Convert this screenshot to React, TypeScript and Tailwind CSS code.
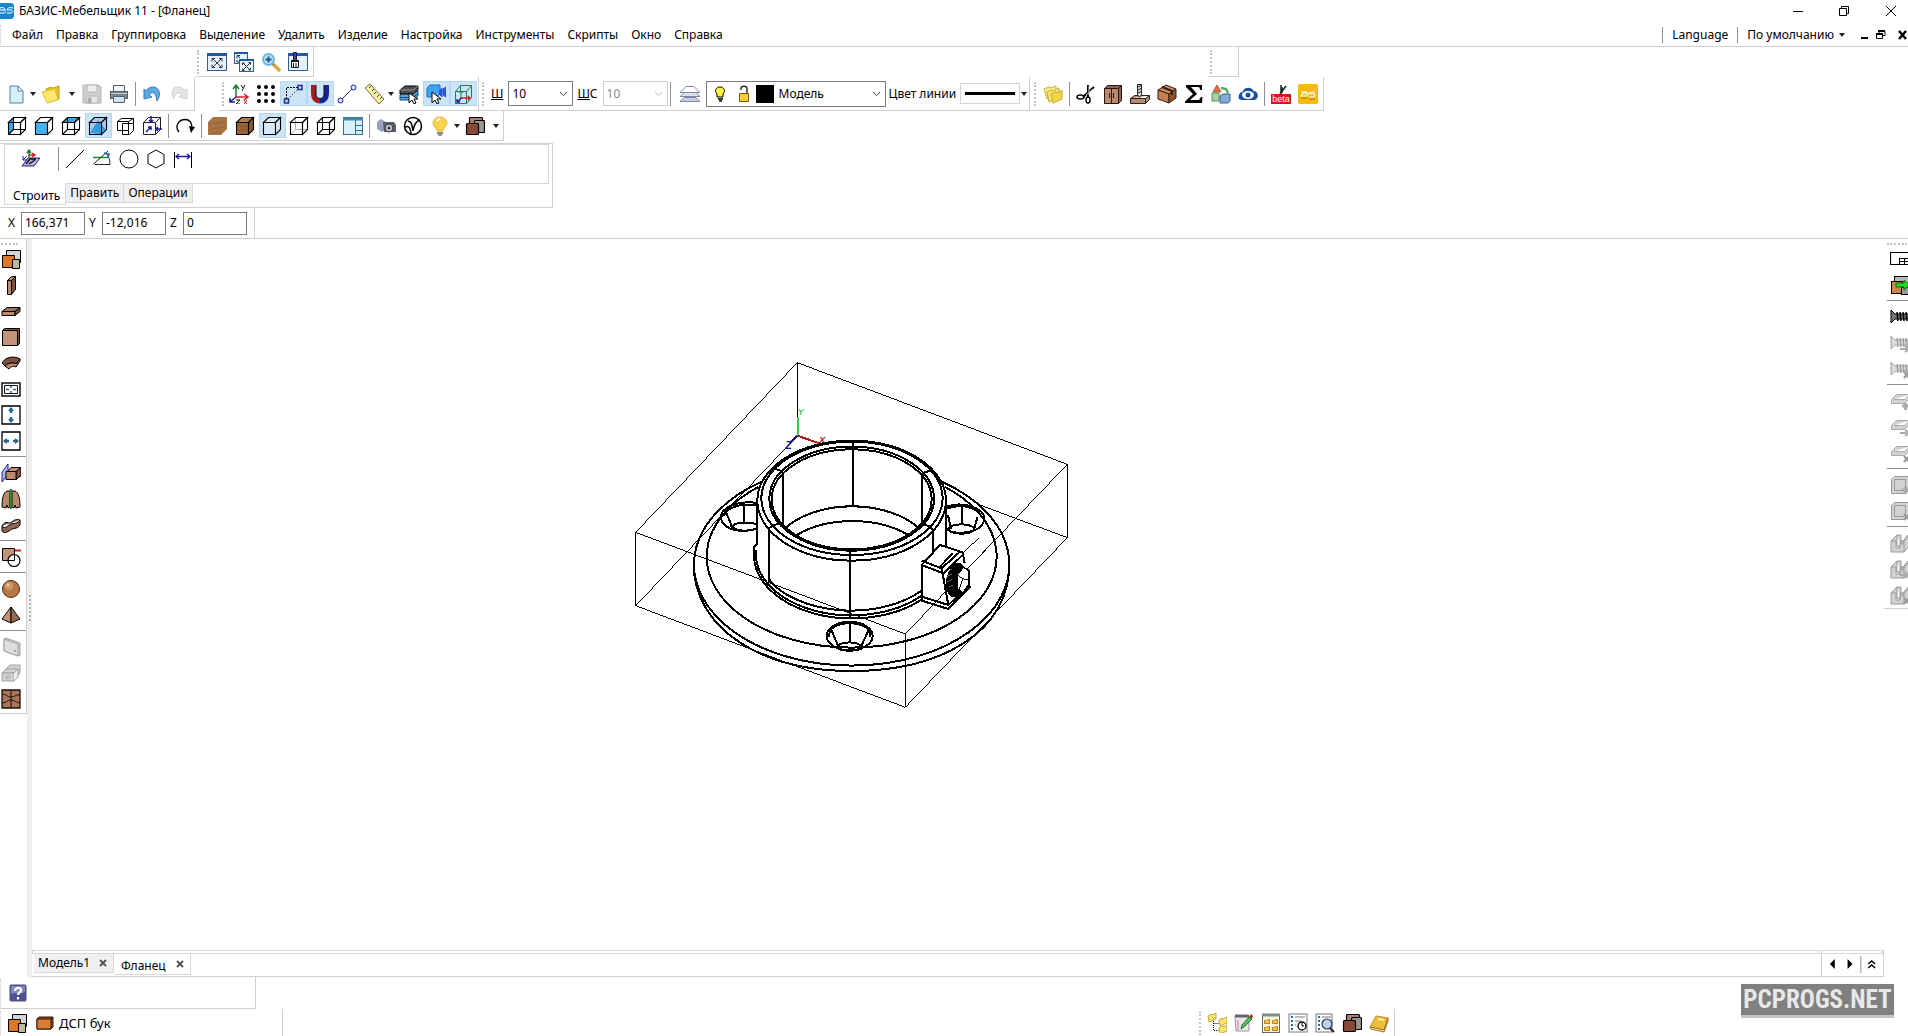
import { useState } from "react";
import type { ReactNode } from "react";

const MENU = ["Файл", "Правка", "Группировка", "Выделение", "Удалить", "Изделие", "Настройка", "Инструменты", "Скрипты", "Окно", "Справка"];

const WOOD = "#b98a70";
const DARK = "#7d5140";
const GREY = "#d2d2d2";

const wire = "M1.500 6.500h12v12h-12zM1.500 6.500l5-5h12l-5 5M18.500 1.500v12l-5 5";
const back = "M6.500 1.500v12h12M6.500 13.500l-5 5";

function Box({ front = "none", top = "none", side = "none", hidden = false, stroke = "#000" }: { front?: string; top?: string; side?: string; hidden?: boolean; stroke?: string }) {
  return (
    <g stroke={stroke} strokeWidth="1.100">
      <path d="M1.500 6.500h12v12h-12z" fill={front} />
      <path d="M1.500 6.500l5-5h12l-5 5z" fill={top} />
      <path d="M18.500 1.500v12l-5 5v-12z" fill={side} />
      {hidden && <path d={back} />}
    </g>
  );
}

function Screw({ c = "#a0a0a0", mark }: { c?: string; mark?: ReactNode }) {
  return (
    <g>
      <path d="M1 3l4 4h15v5H5l-4 4z" fill={c === "#000" ? "#777" : "#ddd"} stroke={c} />
      <path d="M7 5l1 9M10 5l1 9M13 5l1 9M16 5l1 9M19 5l1 9" stroke={c} strokeWidth="1.500" />
      {mark}
    </g>
  );
}

const plusMark = <path d="M12 15h7M15.500 12v7" stroke="#aaa" strokeWidth="3" />;
const arrowMark = <path d="M10 16h7M15 13l4 3-4 3" stroke="#aaa" strokeWidth="2" />;
const crossMark = <path d="M14 13l5 6M19 13l-5 6" stroke="#999" strokeWidth="2" />;

const slab = <path d="M1.500 8.500l5-5h13v4l-5 5h-13zM4 8.500h11l4.500-5M1.500 8.500v4" fill={GREY} stroke="#aaa" />;
const plate = <path d="M1.500 4.500l3-3h14v14l-3 3h-14zM4.500 4.500h11v11h-11z" fill={GREY} stroke="#999" />;
const groove = <path d="M1 8l6-6h4v9h2V8l5-6h3v9l-7 8H1zM7 2v11h4M1 8h5v7h4V8h4v11M14 8l6-6" fill={GREY} stroke="#999" />;

const panels = (a: string, b: string, c: string) => (
  <g stroke="#000">
    <path d="M5.500 1.500h14v12h-14z" fill={b} />
    <path d="M1.500 6.500h12v12h-12z" fill={a} />
    <path d="M11.500 10.500h7v9h-7z" fill={c} />
  </g>
);

const materials = (
  <g stroke="#000" strokeWidth="1.200">
    <rect x="4.500" y="1.500" width="13" height="12" rx="1" fill="#ad7f75" />
    <rect x="9.500" y="4.500" width="10" height="12" rx="1" fill="#9b9691" />
    <rect x="1.500" y="7.500" width="12" height="11" rx="1" fill="#874a35" />
  </g>
);

const folder = (x: number, y: number) => (
  <path d={`M${x} ${y}l3-2 1 1 4-2v6l-7 3z`} fill="#f9e56a" stroke="#b39a1b" strokeWidth=".8" />
);

const windowFrame = (
  <g>
    <rect x=".5" y="1.500" width="19" height="17" fill="#e5f1fc" stroke="#2b5f9e" />
    <path d="M0 2.500h20" stroke="#1f58a4" strokeWidth="3" />
  </g>
);

const icons: Record<string, ReactNode> = {
  fit: <g>{windowFrame}<path d="M6 7l8 8M14 7l-8 8M5 9.500V6.500h3M12 6.500h3v3M15 12.500v3h-3M8 15.500H5v-3" stroke="#333" /></g>,
  fitAll: (
    <g>
      <rect x=".5" y=".5" width="13" height="11" fill="#e5f1fc" stroke="#2b5f9e" />
      <path d="M0 1h14" stroke="#1f58a4" strokeWidth="2" />
      <path d="M3 3l3 3M6 3.500H3v3M3 8v2h3" stroke="#333" />
      <rect x="5.500" y="7.500" width="14" height="12" fill="#e5f1fc" stroke="#2b5f9e" />
      <path d="M5 8h15" stroke="#1f58a4" strokeWidth="2" />
      <path d="M9 11l7 7M16 11l-7 7M8.500 13v-2h2M14.500 10.500h2v2M16.500 16v2h-2M10.500 18.500h-2v-2" stroke="#333" />
    </g>
  ),
  zoomIn: (
    <g>
      <path d="M12 12l6 6" stroke="#d9a93e" strokeWidth="3.500" strokeLinecap="round" />
      <path d="M11 11l2 2" stroke="#888" strokeWidth="2" />
      <circle cx="7.500" cy="7.500" r="5.500" fill="#b9e2f7" stroke="#6db3de" strokeWidth="2" />
      <path d="M4.500 7.500h6M7.500 4.500v6" stroke="#165a9c" strokeWidth="2" />
    </g>
  ),
  brush: (
    <g>
      {windowFrame}
      <path d="M5.500 .5h3v8h-3z" fill="#4b3c9c" stroke="#15154a" />
      <path d="M3.500 8.500h7v7h-7z" fill="#fff" stroke="#111" />
      <path d="M3 9.500h8M5.500 11v5M8 11v5" stroke="#111" />
    </g>
  ),
  doc: <path d="M4 2h8l5 5v12H4zM12 2v5h5" fill="#d7eefb" stroke="#4b83a5" />,
  open: (
    <g strokeLinejoin="round">
      <path d="M5 5l5-2 2 1 6-2v13l-11 3z" fill="#e6bf2d" stroke="#c39f24" />
      <path d="M1 8l13-3 3 11-11 3z" fill="#fbe86c" stroke="#e0bd35" />
    </g>
  ),
  save: (
    <g stroke="#b4b4b4" fill="#cfcfcf">
      <path d="M1 1h16l2 2v16H1z" />
      <path d="M5 1h10v7H5z" fill="#eee" />
      <path d="M4 12h12v7H4z" fill="#e6e6e6" />
      <path d="M6 14h3v5H6z" fill="#aaa" />
    </g>
  ),
  print: (
    <g stroke="#565c63">
      <path d="M4.500 1.500h11v7h-11z" fill="#eef5fb" />
      <rect x="1.500" y="7.500" width="17" height="7" fill="#7c858e" />
      <path d="M2 9.500h16" stroke="#c5ccd2" />
      <path d="M4.500 12.500h11v6h-11z" fill="#cfe5f5" />
    </g>
  ),
  undo: <path d="M2 5v10l8-2-3-2c3-4 7-3 8 6 5-7 2-14-4-14-3 0-5 1-7 4z" fill="#5ba8e2" stroke="#3a7dba" />,
  redo: <path d="M18 5v10l-8-2 3-2c-3-4-7-3-8 4-4-6-2-12 4-12 3 0 5 1 7 4z" fill="#e4e4e4" stroke="#d2d2d2" />,
  axes: (
    <g>
      <path d="M7 13V2M4 5l3-4 3 4" stroke="#1a7a2e" strokeWidth="1.500" />
      <path d="M7 13h11M15 10l4 3-4 3" stroke="#c22" strokeWidth="1.500" />
      <path d="M7 13l-5 4M1 14v4h5" stroke="#1a1a9c" strokeWidth="1.500" />
      <path d="M12 1l2 3M16 1l-3 6M7 16h4l-4 4h4" stroke="#111" />
      <path d="M15 16l3 4M18 16l-3 4" stroke="#c22" />
    </g>
  ),
  dots: <g fill="#000">{[3, 10, 17].map((x) => [3, 10, 17].map((y) => <circle key={x + "," + y} cx={x} cy={y} r="2" />))}</g>,
  ortho: (
    <g stroke="#2a2a8c">
      <path d="M3.500 15V3.500H15" stroke="#000" strokeDasharray="2 1" />
      <path d="M5 15L15 5" strokeDasharray="1 2" stroke="#000" />
      <rect x="1.500" y="15" width="4" height="4" fill="#cce4f7" strokeWidth="1.500" />
      <rect x="15" y="1.500" width="4" height="4" fill="#cce4f7" strokeWidth="1.500" />
    </g>
  ),
  magnet: (
    <g strokeWidth="5">
      <path d="M3.500 1v9c0 4 2.500 7 6.500 7" stroke="#a51c22" />
      <path d="M16.500 1v9c0 4-2.500 7-6.500 7" stroke="#16249b" />
      <path d="M6 1v9c0 3 1.500 4.500 4 4.500s4-1.500 4-4.500V1" stroke="#111" strokeWidth="1" />
    </g>
  ),
  segment: (
    <g stroke="#1d1d8c">
      <path d="M4 16L16 4" stroke="#333" />
      <circle cx="3.500" cy="16.500" r="2.500" fill="#dbe8ff" />
      <circle cx="16.500" cy="3.500" r="2.500" fill="#dbe8ff" />
    </g>
  ),
  ruler: (
    <g>
      <path d="M1 4l5-4 14 15-5 5z" fill="#f3eea0" stroke="#77724b" />
      <path d="M7 2L5 4M10 5L8 7M12 8l-2 2M15 11l-2 2M18 13l-2 2" stroke="#444" />
    </g>
  ),
  pickLayer: (
    <g>
      <path d="M1 11l5-4h13v5l-5 4H1z" fill="#53a8da" stroke="#174d7b" />
      <path d="M1 13.500h13l5-4" stroke="#174d7b" />
      <path d="M1 6l5-4h13v4l-5 4H1z" fill="#4e4e52" stroke="#000" />
      <path d="M1 6h13l5-4" stroke="#999" />
      <path d="M10 9v10l3-3 2 4 2-1-2-4h4z" fill="#fff" stroke="#000" />
    </g>
  ),
  pickCam: (
    <g>
      <path d="M1 4l3-3h10v9l-3 3H1z" fill="#3ea6ee" stroke="#1c71b5" />
      <path d="M13 7l3-3v9l-3-3M17 5l3-2v10l-3-2z" fill="#2b55d9" stroke="#2b55d9" />
      <path d="M6 8v11l3-3 2 4 2-1-2-4h4z" fill="#fff" stroke="#000" />
    </g>
  ),
  boxAxes: (
    <g>
      <path d="M2.500 7.500l5-6h11v12l-5 6h-11zM2.500 7.500h11l5-6M13.500 7.500v12M7.500 1.500v6" stroke="#17824e" />
      <path d="M8 7v7M6 9l2-2 2 2" stroke="#17824e" />
      <path d="M8 14h9M15 12l2 2-2 2" stroke="#d02020" strokeWidth="1.500" />
      <path d="M8 14l-3 4M4 15v3h3" stroke="#20208c" strokeWidth="1.500" />
    </g>
  ),
  stack: (
    <g stroke="#8087a0">
      <path d="M0 17.500l4-4h12l4 4z" fill="#c8cce0" />
      <path d="M0 12.500l4-4h12l4 4z" fill="#dde0ee" />
      <path d="M0 8.500l6-6h8l6 6z" fill="#fff" />
    </g>
  ),
  folders: (
    <g stroke="#cbab35">
      <path d="M1 5l5-2 2 1 5-2v9L4 15z" fill="#fbee88" />
      <path d="M4 8l4-2 2 1 6-3v9L6 18z" fill="#fae370" />
      <path d="M8 10l4-2 2 1 5-3v9l-9 4z" fill="#f3d548" />
    </g>
  ),
  scissors: (
    <g stroke="#000">
      <path d="M12 1v12M18 3L7 13" strokeWidth="2" />
      <path d="M13 2v9M17 5l-7 6" stroke="#ccc" />
      <ellipse cx="4.500" cy="13" rx="3.500" ry="2" strokeWidth="1.500" />
      <ellipse cx="12" cy="16" rx="2" ry="3" strokeWidth="1.500" />
    </g>
  ),
  wardrobe: (
    <g stroke="#2a1510">
      <path d="M1.500 4.500l3-3h14v15l-3 3h-14z" fill="#8e6555" />
      <path d="M15.500 4.500l3-3" />
      <path d="M1.500 4.500h14v15h-14z" fill={WOOD} />
      <path d="M8.500 5v14M6.500 9v5M10.500 9v5" />
    </g>
  ),
  drill: (
    <g stroke="#222">
      <path d="M.5 14.500l4-3h15v4l-4 4H.5zM.5 14.500h15l4-3M15.500 14.500v5" fill={WOOD} />
      <path d="M7.500 .5h4v10l-2 3-2-3z" fill="#ddd" />
      <path d="M8 3l4-2M8 6l4-2M8 9l4-2" />
    </g>
  ),
  carton: (
    <g stroke="#3a1d0c">
      <path d="M1 6l8-5 10 4-7 5z" fill="#c98e64" />
      <path d="M1 6l11 4v9L1 15z" fill="#c08254" />
      <path d="M19 5v9l-7 5v-9z" fill="#8d542d" />
      <path d="M5 3l10 4v4" strokeWidth="2" />
    </g>
  ),
  sigma: <path d="M2 1h16v5h-1.500l-1.500-3H7l6 7-7 6h9l2-3h1.500l-.5 6H1v-1.500l8-7.500-7-7z" fill="#000" />,
  recycle: (
    <g>
      <path d="M6 1l4 7H2z" fill="#e0714c" stroke="#b5523a" />
      <path d="M1 9h7v8H1z" fill="#a9d4a3" stroke="#4d924d" />
      <path d="M10 4l5 1 2 4" stroke="#5aae5a" strokeWidth="2.500" />
      <path d="M9 12l3-2h7v7l-2 2H9z" fill="#82acd6" stroke="#2e609b" />
    </g>
  ),
  cloudEye: (
    <g>
      <path d="M.5 13c0-3 2-5 4-5 1-5 9-6 11-1 3 0 5 3 4 6s-3 3-5 3h-10c-3 0-4-1-4-3z" fill="#1b4fa0" />
      <ellipse cx="10" cy="11" rx="6" ry="4" fill="#fff" />
      <circle cx="10" cy="11" r="2.500" fill="#1b4fa0" />
    </g>
  ),
  beta: (
    <g>
      <path d="M10 1v9M15 2l-6 8M11 3v6" stroke="#222" strokeWidth="1.500" />
      <rect x="0" y="10" width="20" height="10" fill="#d4151b" />
      <text x="10" y="18" fontSize="9" textAnchor="middle" fill="#fff" fontFamily="Liberation Sans, sans-serif">beta</text>
    </g>
  ),
  basisYellow: (
    <g>
      <rect width="20" height="20" rx="2" fill="#f5b90f" />
      <path d="M3 8c4-1 6 0 6 1M3 12h5c2 0 2-3 0-3-4 0-5 3-5 3zM17 8c-4 0-6 0-6 2h4c3 0 2 3 0 3h-4" stroke="#fff" strokeWidth="1.200" />
      <path d="M3 14h6M11 15h6" stroke="#9b7713" />
    </g>
  ),
  cubeLeft: <g><path d="M1.500 6.500l5-5v12l-5 5z" fill="#3fa6e8" /><Box hidden /></g>,
  cubeFront: <Box front="#41b4ee" />,
  cubeTop: <Box top="#41a4e0" hidden />,
  cubeIso: <g><Box front="#a9ccee" side="#a9ccee" top="#a9ccee" /><path d="M10 4l8 10-5 4-11-1z" fill="#2f9be3" /><path d={wire} stroke="#000" /></g>,
  cubeFrame: <path d="M2.500 5.500h11v9h-11zM2.500 5.500l4-3h12l-5 3M7.500 7.500h11v-5M7.500 7.500v11h7l4-4v-7M13.500 14.500v4" stroke="#000" />,
  cubeArrows: (
    <g>
      <path d={wire} stroke="#222" />
      <path d="M9 0v6M7 4l2 2 2-2M20 13h-6M16 11l-2 2 2 2M4 16l5-5M6 11h3v3" stroke="#1b1ba0" strokeWidth="1.500" />
    </g>
  ),
  rotate: <g><path d="M4 16C-1 10 4 3.500 10 3.500c5 0 7 4 7 9" stroke="#000" strokeWidth="1.300" /><path d="M14 10l6 1-4 6z" fill="#000" /></g>,
  woodFlat: <g><path d="M0 6l5-5h14v12l-6 6H0z" fill="#a87445" /><path d="M2 9c6-5 10 2 16-5M2 14c6-4 9 1 16-5M3 18c5-3 7 0 11-4" stroke="#94602f" /></g>,
  woodBox: <g><Box front="#9c6437" top="#b27d4c" side="#8a5830" /><path d="M2 10c4-2 7 2 11 0M2 15c4-3 7 1 11-2" stroke="#84501f" /></g>,
  blueBox: <Box front="#d6e9f8" top="#d6e9f8" side="#d6e9f8" />,
  hiddenThin: <g><path d={back} stroke="#aaa" /><Box /></g>,
  wireBox: <Box hidden />,
  layout: (
    <g>
      <rect x=".5" y="1.500" width="19" height="17" fill="#d8f1fb" stroke="#2f7295" />
      <path d="M0 3h20" stroke="#3f89b0" strokeWidth="3" />
      <path d="M12.500 4v15M12 9.500h7M12 14.500h7" stroke="#2f7295" />
    </g>
  ),
  camera: (
    <g>
      <path d="M1 6l4-3 5 3v7l-4 3-5-3z" fill="#9b9fc0" />
      <path d="M7 6h11l2 3v7H8z" fill="#5c5d6f" />
      <circle cx="13" cy="12" r="4" fill="#bfc4cf" stroke="#333" />
      <circle cx="13" cy="12" r="1.500" fill="#334" />
    </g>
  ),
  vray: <g stroke="#000"><circle cx="10" cy="10" r="8.500" strokeWidth="1.500" /><path d="M5 5c4 1 4 4 5 10 1-6 3-10 7-11M2 11c4-2 6 2 6 7" strokeWidth="1.500" /></g>,
  bulb: (
    <g>
      <path d="M10 1c-4 0-7 3-7 6s4 5 4 8h6c0-3 4-5 4-8s-3-6-7-6z" fill="#fbd34c" stroke="#e3b44a" />
      <path d="M7 5c1-2 3-2 3-2" stroke="#fff" strokeWidth="2" />
      <path d="M7 16h6v2l-2 2H9l-2-2z" fill="#8a8a8a" />
    </g>
  ),
  materials,
  sketch: (
    <g>
      <path d="M1 17l6-8h12l-6 8z" fill="#b8b2ea" stroke="#29206e" />
      <path d="M5 15l4-5h6M8 15l6-4" stroke="#111" strokeWidth="1.500" />
      <path d="M8 9V1M6 4l2-3 2 3" stroke="#208038" strokeWidth="1.500" />
      <path d="M8 6l5 0M11 4l3 2-3 2" stroke="#c22" strokeWidth="1.500" />
      <path d="M6 7L2 11M2 7v4h4" stroke="#1b1ba0" />
    </g>
  ),
  line: <path d="M1 19L19 1" stroke="#000" />,
  angle: <g><path d="M1 8.500h15" stroke="#1b8b2e" strokeWidth="1.500" /><path d="M1 15.500L16 2M3 15.500h15c0-5-1-8-4-11" stroke="#222" /><path d="M12 4l5 1-1 4" stroke="#26a" strokeWidth="1.500" /></g>,
  circle: <circle cx="10" cy="10" r="9" stroke="#000" />,
  hexagon: <path d="M10 1l8 4.500v9L10 19l-8-4.500v-9z" stroke="#000" />,
  dimension: <g><path d="M1.500 3v16M18.500 3v16" stroke="#000" /><path d="M3 7.500h14M6 5L3 7.500 6 10M14 5l3 2.500-3 2.500" stroke="#1b1ba0" strokeWidth="1.300" /></g>,
  panelsOrange: panels("#d97a2b", "#d3d3da", "#bfb89c"),
  vertical: <g stroke="#000"><path d="M10.500 5.500l4-4v13l-4 5z" fill={DARK} /><path d="M6.500 5.500l4-4h4l-4 4z" fill={WOOD} /><path d="M6.500 5.500h4v14h-4z" fill={WOOD} /></g>,
  horizontal: <g stroke="#000"><path d="M1 10.500l5-4h13l-5 4z" fill="#9b7464" /><path d="M1 10.500h13v4H1z" fill={WOOD} /><path d="M14 10.500l5-4v4l-5 4z" fill={DARK} /></g>,
  frontal: <g stroke="#000"><path d="M1.500 3.500l2-2h15v15l-2 2z" fill={DARK} /><path d="M1.500 3.500h15v15h-15z" fill="#c39377" /></g>,
  bent: <g stroke="#000"><path d="M1 10c4-7 13-7 18-4l-4 5c-3-2-8-1-11 2z" fill={DARK} /><path d="M4 13c3-3 8-4 11-2l4-5v2l-4 6c-2-1-5-1-7 2z" fill={WOOD} /></g>,
  frameArrows: (
    <g>
      <path d="M1 4h18v13H1z" fill="#fff" stroke="#111" strokeWidth="1.500" />
      <path d="M3.500 6.500h13v8h-13z" stroke="#111" />
      <path d="M5 10.500h3M12 10.500h3M10 7v2M10 12v2" stroke="#31668f" strokeWidth="1.500" />
    </g>
  ),
  arrowsV: <g><path d="M1 1h18v18H1z" stroke="#000" strokeWidth="1.300" /><path d="M10 3v5M10 12v5" stroke="#256493" strokeWidth="2.500" /><path d="M7 6l3-4 3 4zM7 14l3 4 3-4z" fill="#256493" /></g>,
  arrowsH: <g><path d="M1 1h18v18H1z" stroke="#000" strokeWidth="1.300" /><path d="M3 10h5M12 10h5" stroke="#256493" strokeWidth="2.500" /><path d="M6 7l-4 3 4 3zM14 7l4 3-4 3z" fill="#256493" /></g>,
  byPlane: <g stroke="#000"><path d="M6 8.500l4-4h10v8l-5 4H6z" fill={WOOD} /><path d="M15 8.500l5-4v8l-5 4z" fill={DARK} /><path d="M1 9l6-8v10l-6 8z" fill="#a9b6ee" stroke="#232399" /><path d="M5 8.500h10v8H5z" fill={WOOD} /></g>,
  symmetry: <g stroke="#000"><path d="M1 18c0-8 1-14 5-16h3v16l-2 1-1-3-1 3zM19 18c0-8-1-14-5-16h-3v16l2 1 1-3 1 3z" fill={WOOD} /><path d="M10 0v20" stroke="#268528" strokeWidth="2" /></g>,
  wavy: <path d="M1 11c4-7 6-1 10-4 3-3 6-3 8-2v5c-3 5-7 2-11 6-3 2-6 2-7 0zM1 11c3 4 6-1 9-2s6 0 9-4" fill="#8f6553" stroke="#000" />,
  cutout: <g><path d="M1.500 1.500h12v12h-12z" fill="#c39377" stroke="#000" /><path d="M14 3.500h6" stroke="#d3222c" strokeWidth="2" /><circle cx="13" cy="13.500" r="6" fill="#fff" stroke="#000" strokeWidth="1.200" /><path d="M7 13.500h6.500V8" stroke="#000" /></g>,
  ball: <g><circle cx="10" cy="10" r="8.500" fill="#b97745" stroke="#4a2610" /><circle cx="8" cy="7" r="4" fill="#d39767" /><circle cx="7" cy="6" r="1.500" fill="#efc9a6" /></g>,
  pyramid: <g stroke="#000"><path d="M10 2L1 14l9 4z" fill="#c39377" /><path d="M10 2l9 12-9 4z" fill="#9a6a50" /></g>,
  door: <g stroke="#a2a2a2" fill={GREY}><path d="M3 2l2-1 14 5v12l-2 1L3 14z" /><path d="M3 2l14 5v12L3 14z" fill="#dedede" /><path d="M14 13v2" stroke="#777" /></g>,
  drawer: <g stroke="#a2a2a2" fill={GREY}><path d="M5 6l4-4h10v8l-4 4H5z" /><path d="M1 10l4-4h12l-4 4z" /><path d="M1 10h12v8H1z" /><path d="M13 10l4-4v8l-4 4M5 13h4v2H5z" fill="#eee" /></g>,
  texture: <g stroke="#1c0f08"><path d="M1 1h18v18H1z" fill="#a8755a" strokeWidth="1.300" /><path d="M1 5c4 0 5 3 9 3s5-3 9-2M1 14c5 0 5-3 9-3s5 3 9 3M10 1v18" /></g>,
  sheet: <g><path d="M.5 3.500h20v12H.5z" fill="#fff" stroke="#000" strokeWidth="1.200" /><path d="M9.500 9.500h10M9.500 12.500h10M9.500 9v7M14.500 9v7" stroke="#000" /></g>,
  panelsMove: (
    <g stroke="#000">
      <rect x="4.500" y="1.500" width="15" height="12" fill="#b9bcb9" />
      <rect x="1.500" y="6.500" width="11" height="12" fill="#d08648" />
      <rect x="11.500" y="12.500" width="8" height="7" fill="#99a" />
      <path d="M6 8h8V5l6 5-6 5v-3H6z" fill="#28d628" stroke="#0c6b0c" />
    </g>
  ),
  screw: <Screw c="#000" />,
  screwMove: <Screw mark={arrowMark} />,
  screwDel: <Screw mark={crossMark} />,
  slabAdd: <g>{slab}{plusMark}</g>,
  slabMove: <g>{slab}{arrowMark}</g>,
  slabDel: <g>{slab}{crossMark}</g>,
  plateAdd: <g>{plate}{plusMark}</g>,
  plateDel: <g>{plate}{crossMark}</g>,
  groove,
  grooveMove: <g>{groove}{arrowMark}</g>,
  grooveDel: <g>{groove}{crossMark}</g>,
  help: (
    <g>
      <rect x="2" y="2" width="16" height="16" rx="1" fill="#50548e" stroke="#4a4e80" />
      <path d="M3 3h14v6c-5 3-9 0-14 2z" fill="#8286b8" />
      <path d="M7 8c0-4 6-4 6-1 0 3-3 2-3 5M10 14v2.500" stroke="#fff" strokeWidth="2.200" />
    </g>
  ),
  board: <g stroke="#2b1406"><path d="M2 6l2-2h14v10l-2 2H2z" fill="#9c5423" /><path d="M2 6h14v10H2z" fill="#dc7d31" /><path d="M16 6l2-2" /></g>,
  tree: <g><path d="M6.500 8v9.500h5M6.500 10.500h5" stroke="#000" strokeDasharray="1 1" />{folder(1, 3)}{folder(12, 7)}{folder(12, 15)}</g>,
  note: <g><path d="M1 3h14v15H2z" fill="#eee5f1" stroke="#a58fa8" /><path d="M1 3h14" stroke="#666" strokeWidth="3" /><path d="M4 7v10" stroke="#c79" /><path d="M7 16l1-4 7-8 3 2-8 8z" fill="#57c257" stroke="#2c7a2c" /><path d="M15 4l2-3 2 2-1 3z" fill="#9c3b2c" /></g>,
  catalog: (
    <g>
      <rect x="1.500" y="1.500" width="17" height="18" fill="#fff6dc" stroke="#666" />
      <path d="M1 2h18" stroke="#7d8b8b" strokeWidth="3" />
      <path d="M3.500 7.500h2l1-1h2v4h-5zM11.500 7.500h2l1-1h2v4h-5zM3.500 14.500h2l1-1h2v4h-5zM11.500 14.500h2l1-1h2v4h-5z" fill="#f4c050" stroke="#b8811f" />
    </g>
  ),
  history: (
    <g>
      <rect x="1" y="1" width="18" height="18" fill="#fff" stroke="#6c7a88" />
      <path d="M3 4h2M3 8h2M3 12h2M3 16h2" stroke="#226c9c" strokeWidth="2" />
      <path d="M7 4h10M7 8h6M7 12h1" stroke="#777" />
      <circle cx="14" cy="13" r="4" fill="#fff" stroke="#000" strokeWidth="1.300" />
      <path d="M14 10v3h2" stroke="#000" />
    </g>
  ),
  search: (
    <g>
      <rect x="1" y="1" width="16" height="18" fill="#fff" stroke="#6c7a88" />
      <path d="M3 4h2M3 8h2M3 12h2M3 16h2" stroke="#226c9c" strokeWidth="2" />
      <path d="M7 4h9" stroke="#777" />
      <path d="M15 15l4 4" stroke="#222" strokeWidth="2" />
      <circle cx="12" cy="11" r="5" fill="#b9d3f3" stroke="#334" strokeWidth="1.200" />
    </g>
  ),
  book: <g><path d="M1 14L7 3l12 2-4 12z" fill="#ecbd3a" stroke="#b98a26" /><path d="M1 14l14 3 4-12v3l-4 11-13-3z" fill="#fff3c9" stroke="#a0701a" /><path d="M9 6l6 1" stroke="#fff0a0" strokeWidth="2" /></g>,
};

function Icon({ name }: { name: string }) {
  return (
    <svg viewBox="0 0 20 20" className="h-5 w-5 shrink-0" fill="none" aria-hidden="true">
      {icons[name]}
    </svg>
  );
}

function ToolButton({ name, active = false, tall = false }: { name: string; active?: boolean; tall?: boolean }) {
  return (
    <button
      type="button"
      aria-label={name}
      className={`flex w-[27px] shrink-0 items-center pl-[3px] ${tall ? "h-[26px]" : "h-[25px]"} ${
        active ? "bg-[#cce4f7] outline outline-1 -outline-offset-1 outline-[#b3d6f2]" : "hover:bg-sky-100"
      }`}
    >
      <Icon name={name} />
    </button>
  );
}

function Caret() {
  return (
    <svg viewBox="0 0 6 4" className="h-1 w-1.5 shrink-0" aria-hidden="true">
      <path d="M0 0h6L3 4z" fill="#222" />
    </svg>
  );
}

function Chevron({ color = "#444" }: { color?: string }) {
  return (
    <svg viewBox="0 0 9 6" className="pointer-events-none mr-1 h-1.5 w-[9px] shrink-0" fill="none" aria-hidden="true">
      <path d="M1 1l3.500 3.500L8 1" stroke={color} />
    </svg>
  );
}

function CloseMark() {
  return (
    <svg viewBox="0 0 8 8" className="h-2 w-2" aria-hidden="true">
      <path d="M1 1l6 6M7 1L1 7" stroke="#555" strokeWidth="2" />
    </svg>
  );
}

function DropArrow({ wide = false }: { wide?: boolean }) {
  return (
    <button type="button" aria-label="Список" className={`flex h-6 shrink-0 items-center ${wide ? "w-3.5 justify-center" : "w-2 justify-start"}`}>
      <Caret />
    </button>
  );
}

function Grip() {
  return <span className="mx-px h-6 shrink-0 self-center border-l-2 border-dotted border-[#c4c4c4]" />;
}

function Sep() {
  return <span className="ml-[2px] mr-[3px] h-6 w-px shrink-0 self-center bg-[#8e8e8e]" />;
}

function Side({ groups }: { groups: string[][] }) {
  return (
    <>
      <span className="mb-px mt-1 w-5 shrink-0 border-t-2 border-dotted border-[#c4c4c4]" />
      {groups.map((group, i) => (
        <div key={i} className="flex w-full flex-col">
          {i > 0 && <span className="mb-[3px] mt-[2px] h-px w-full shrink-0 bg-[#8e8e8e]" />}
          {group.map((name) => (
            <ToolButton key={name} name={name} tall />
          ))}
        </div>
      ))}
    </>
  );
}

function WidthSelect({ id, label, rest = "", disabled = false }: { id: string; label: string; rest?: string; disabled?: boolean }) {
  return (
    <div className="flex items-center gap-[5px]">
      <label htmlFor={id}>
        <span className="underline">{label}</span>
        {rest}
      </label>
      <div className={`flex h-[25px] w-[65px] items-center border ${disabled ? "border-[#ccc] text-[#8a8a8a]" : "border-[#7a7a7a]"}`}>
        <select id={id} disabled={disabled} className="min-w-0 flex-1 appearance-none bg-transparent pl-[3px] outline-none">
          <option>10</option>
        </select>
        <Chevron color={disabled ? "#bbb" : "#444"} />
      </div>
    </div>
  );
}

function Coord({ axis, initial }: { axis: string; initial: string }) {
  const [value, setValue] = useState(initial);
  return (
    <label className="flex items-center">
      <span className="w-[13px]">{axis}</span>
      <input
        value={value}
        onChange={(e) => setValue(e.target.value)}
        className="h-[23px] w-16 border border-[#7a7a7a] px-[3px] pb-[2px] outline-none"
      />
    </label>
  );
}

// Wireframe of the flange with its bounding box, drawn at triple scale
function Flange() {
  return (
    <svg className="h-full w-full" fill="none" stroke="#000" aria-label="Фланец">
      <g transform="translate(588 111) scale(.33333)" strokeWidth="6" shapeRendering="crispEdges">
        <g strokeWidth="3">
          <path d="M532 258V38L1342 343V563L856 1072V852L47 547V767L856 1072M532 38L47 547M856 852L1342 343M532 258L47 767M1080 465L1342 563" />
        </g>
        <path d="M425 395A473 303 0 1 0 965 395" />
        <path d="M221 640C221 840 430 963 694 963S1168 850 1168 640" />
        <path d="M415 411A435 273 0 1 0 975 411" />
        <path d="M412 585V452A283 180 0 0 1 978 452V590" />
        <path d="M412 452A283 180 0 0 0 978 452" />
        <ellipse cx="696" cy="445" rx="272" ry="170" />
        <ellipse cx="695" cy="446" rx="247" ry="156" />
        <ellipse cx="695" cy="448" rx="240" ry="150" />
        <path d="M699 272V470M489 365V522M906 370V525M446 535V690M940 540V612M690 600V805" />
        <path d="M462 355L489 365M936 360L906 370M446 535L462 524L489 522M906 525L925 527L940 540M455 362L470 350M930 352L942 366" />
        <path d="M495 535A246 156 0 0 1 895 533M530 555A246 156 0 0 1 865 555" />
        <path d="M446 690A284 180 0 0 0 905 722M408 600A287 185 0 0 0 905 737M402 590V615A294 190 0 0 0 905 749M412 582L402 592M440 710L450 685" />

        <path d="M412 459C350 450 303 475 303 500S330 543 372 543L412 537M412 467C360 455 315 478 313 497M372 460V515M318 487L337 532M337 530A40 14 0 0 1 412 525M330 526C350 546 390 546 412 534" />
        <path d="M980 470C1030 452 1095 475 1093 508C1090 540 1040 555 992 545L980 536M980 476C1030 458 1078 475 1086 505M1026 465V523M1073 500L1062 538M984 495L993 538" />
        <ellipse cx="1024" cy="537" rx="38" ry="14" />
        <ellipse cx="689" cy="858" rx="69" ry="43" />
        <path d="M627 862C625 830 655 820 689 820S755 832 750 862M689 815V877M635 842L656 892M745 842L722 892" />
        <path d="M650 893C660 872 715 872 728 893C715 905 665 905 650 893z" />

        <path d="M905 645L960 585L1028 607L1034 650L1052 708L985 777L905 752z" fill="#fff" stroke="none" />
        <path d="M1034 640L1028 607L960 585L905 645V752L985 777L1052 708" />
        <path d="M905 632L965 655L1020 605M905 645L970 670L1028 615M965 655L985 765L1050 705M905 740L985 765M998 610L960 650" />
        <path d="M1030 607L1076 565M910 795L1100 596" strokeWidth="3" />
        <ellipse cx="1008" cy="690" rx="26" ry="49" fill="#000" transform="rotate(10 1008 690)" />
        <path d="M1012 672L1030 652L1048 662L1048 700L1028 730L1010 714z" fill="#fff" strokeWidth="5" />
        <path d="M1014 676L1028 686L1046 690M1028 686L1018 716" strokeWidth="3" />
        <path d="M984 665L996 656M982 680L996 672M982 696L996 688M986 712L1000 704" stroke="#999" strokeWidth="2" />

        <g strokeWidth="6">
          <path d="M535 200V258" stroke="#40c850" />
          <path d="M535 258L598 280" stroke="#b01818" />
          <path d="M532 258L512 276" stroke="#10108c" />
        </g>
        <g stroke="none" fontFamily="Liberation Sans, sans-serif" fontStyle="italic" fontWeight="bold">
          <text x="533" y="196" fontSize="26" fill="#40c850">Y</text>
          <text x="597" y="280" fontSize="28" fill="#b01818">X</text>
          <text x="496" y="297" fontSize="32" fill="#10108c">Z</text>
        </g>
      </g>
    </svg>
  );
}

const LEFT = [
  ["panelsOrange", "vertical", "horizontal", "frontal", "bent", "frameArrows", "arrowsV", "arrowsH"],
  ["byPlane", "symmetry", "wavy"],
  ["cutout"],
  ["ball", "pyramid"],
  ["door", "drawer", "texture"],
];

const RIGHT = [
  ["sheet", "panelsMove"],
  ["screw", "screwMove", "screwDel"],
  ["slabAdd", "slabMove", "slabDel"],
  ["plateAdd", "plateDel"],
  ["groove", "grooveMove", "grooveDel"],
];

export default function App() {
  const [tab, setTab] = useState("Строить");

  return (
    <div className="relative flex min-h-screen flex-col overflow-hidden bg-white font-['Noto_Sans','Open_Sans',sans-serif] text-[12px] leading-4 text-black">
      <header className="flex h-[23px] shrink-0 items-center pb-px">
        <svg viewBox="0 0 14 16" className="h-4 w-3.5" fill="none" aria-hidden="true">
          <path d="M0 0h12l2 2v12l-2 2H0z" fill="#1787cc" />
          <path d="M0 5c3-1 5 0 5 2H0M0 10h4c2 0 2-3 0-3M13 5c-3-1-6 0-6 2h4c2 0 2 3 0 3H7" stroke="#fff" />
        </svg>
        <h1 className="ml-[5px]">БАЗИС-Мебельщик 11 - [Фланец]</h1>
        <div className="ml-auto mr-[11px] flex items-center gap-9">
          <button type="button" aria-label="Свернуть">
            <svg viewBox="0 0 10 10" className="h-2.5 w-2.5" aria-hidden="true"><path d="M0 5.500h10" stroke="#000" /></svg>
          </button>
          <button type="button" aria-label="Восстановить">
            <svg viewBox="0 0 10 10" className="h-2.5 w-2.5" fill="none" aria-hidden="true"><path d="M.5 2.500h7v7h-7zM2.500 2V.5h7v7H8" stroke="#000" /></svg>
          </button>
          <button type="button" aria-label="Закрыть">
            <svg viewBox="0 0 12 12" className="h-3 w-3" aria-hidden="true"><path d="M1 1l10 10M11 1L1 11" stroke="#000" /></svg>
          </button>
        </div>
      </header>

      <nav className="flex h-6 shrink-0 items-center border-b border-[#cfcfcf]">
        <span className="h-5 shrink-0 border-l border-dotted border-[#c4c4c4]" />
        <div className="ml-[11px] flex gap-[13px]">
          {MENU.map((item) => (
            <button key={item} type="button">{item}</button>
          ))}
        </div>
        <div className="ml-auto mr-px flex items-center">
          <span className="h-4 w-px bg-[#8e8e8e]" />
          <button type="button" className="px-[9px]">Language</button>
          <span className="h-4 w-px bg-[#8e8e8e]" />
          <button type="button" className="ml-[9px] flex items-center gap-[5px]">По умолчанию <Caret /></button>
          <svg viewBox="0 0 46 12" className="ml-4 h-3 w-[46px]" fill="none" aria-hidden="true">
            <path d="M0 9h7" stroke="#000" strokeWidth="2" />
            <path d="M15.500 5.500h6v4h-6zM18 5V2.500h6v4h-2" stroke="#000" />
            <path d="M15 5h7M17 2h7" stroke="#000" strokeWidth="2" />
            <path d="M38 2l7 8M45 2l-7 8" stroke="#000" strokeWidth="2.500" />
          </svg>
        </div>
      </nav>

      <div className="flex h-[30px] shrink-0">
        <div className="ml-[196px] flex items-center border-b border-r border-[#cfcfcf] pr-px">
          <Grip />
          <span className="w-1" />
          {["fit", "fitAll", "zoomIn", "brush"].map((n) => <ToolButton key={n} name={n} />)}
        </div>
        <div className="ml-[895px] flex w-[30px] border-b border-r border-[#cfcfcf]"><Grip /></div>
      </div>

      <div className="flex h-[34px] shrink-0">
        <div className="flex w-[195px] items-center border-b border-r border-[#cfcfcf] pl-[3px]">
          <ToolButton name="doc" />
          <DropArrow />
          <ToolButton name="open" />
          <DropArrow wide />
          <ToolButton name="save" />
          <ToolButton name="print" />
          <Sep />
          <ToolButton name="undo" />
          <ToolButton name="redo" />
        </div>
        <div className="ml-6 flex items-center border-b border-r border-[#cfcfcf] pl-0.5 pr-px">
          <Grip />
          <span className="w-px" />
          <ToolButton name="axes" />
          <ToolButton name="dots" />
          <ToolButton name="ortho" active />
          <ToolButton name="magnet" active />
          <ToolButton name="segment" />
          <ToolButton name="ruler" />
          <DropArrow />
          <ToolButton name="pickLayer" />
          <ToolButton name="pickCam" active />
          <ToolButton name="boxAxes" active />
        </div>
        <div className="flex items-center border-b border-r border-[#cfcfcf] pl-0.5">
          <Grip />
          <div className="ml-1.5 flex gap-1">
            <WidthSelect id="line-width" label="Ш" />
            <WidthSelect id="line-width-c" label="Ш" rest="С" disabled />
          </div>
          <Sep />
          <button type="button" aria-label="stack" className="mx-[5px] flex h-6 w-[22px] items-center justify-center"><Icon name="stack" /></button>
          <div className="flex h-[26px] w-[180px] items-center border border-[#7a7a7a]">
            <svg viewBox="0 0 62 20" className="ml-1.5 h-5 w-[62px] shrink-0" fill="none" aria-hidden="true">
              <path d="M4 10c-3-3-1-7 3-7s6 4 3 7v3H4z" fill="#ffee3d" stroke="#000" />
              <path d="M5 15h5M6 17h3" stroke="#000" strokeWidth="1.500" />
              <path d="M28 6V4.500c0-3 6-3 6 0V10" stroke="#333" strokeWidth="1.500" />
              <path d="M26.500 9.500h9v8h-9z" fill="#f8cf2e" stroke="#7a5a00" />
              <path d="M43 1h18v18H43z" fill="#000" />
            </svg>
            <select aria-label="Слой" className="ml-1 min-w-0 flex-1 appearance-none bg-transparent outline-none">
              <option>Модель</option>
            </select>
            <Chevron />
          </div>
          <span className="ml-[3px]">Цвет линии</span>
          <button type="button" aria-label="Цвет линии" className="ml-1 mr-px flex h-[21px] w-[60px] items-center border border-[#d4d4d4] px-1">
            <span className="h-[3px] w-full bg-black" />
          </button>
          <DropArrow />
        </div>
        <div className="flex items-center border-b border-r border-[#cfcfcf] pl-[3px] pr-px">
          <Grip />
          <span className="w-[3px]" />
          <ToolButton name="folders" />
          <Sep />
          {["scissors", "wardrobe", "drill", "carton", "sigma", "recycle", "cloudEye"].map((n) => <ToolButton key={n} name={n} />)}
          <Sep />
          <ToolButton name="beta" />
          <ToolButton name="basisYellow" />
        </div>
      </div>

      <div className="flex h-[30px] shrink-0">
        <div className="flex w-[504px] items-center border-b border-r border-[#cfcfcf] pl-1">
          {["cubeLeft", "cubeFront", "cubeTop"].map((n) => <ToolButton key={n} name={n} />)}
          <ToolButton name="cubeIso" active />
          <ToolButton name="cubeFrame" />
          <ToolButton name="cubeArrows" />
          <Sep />
          <ToolButton name="rotate" />
          <Sep />
          <ToolButton name="woodFlat" />
          <ToolButton name="woodBox" />
          <ToolButton name="blueBox" active />
          <ToolButton name="hiddenThin" />
          <ToolButton name="wireBox" />
          <ToolButton name="layout" />
          <Sep />
          <ToolButton name="camera" />
          <ToolButton name="vray" />
          <ToolButton name="bulb" />
          <DropArrow />
          <ToolButton name="materials" />
          <DropArrow wide />
        </div>
      </div>

      <section className="mt-[2px] flex h-[65px] w-[553px] shrink-0 flex-col border-b border-r border-t border-[#cfcfcf] pl-1 pr-[3px]">
        <div className="flex h-10 items-center border border-[#d8d8d8] pb-2.5 pl-[13px]">
          <ToolButton name="sketch" />
          <span className="w-[11px]" />
          <Sep />
          {["line", "angle", "circle", "hexagon", "dimension"].map((n) => <ToolButton key={n} name={n} />)}
        </div>
        <div className="flex items-start">
          {["Строить", "Править", "Операции"].map((t) => (
            <button
              key={t}
              type="button"
              onClick={() => setTab(t)}
              className={
                tab === t
                  ? "-mt-px h-[22px] border-x border-b border-[#d8d8d8] bg-white pl-2 pr-[5px] pt-1"
                  : "h-[19px] border-b border-r border-[#d8d8d8] bg-[#f0f0f0] px-1"
              }
            >
              {t}
            </button>
          ))}
        </div>
      </section>

      <div className="flex h-[31px] shrink-0 border-b border-[#cfcfcf]">
        <div className="flex w-[255px] items-center gap-1 border-r border-[#cfcfcf] pl-2">
          <Coord axis="X" initial="166,371" />
          <Coord axis="Y" initial="-12,016" />
          <Coord axis="Z" initial="0" />
        </div>
      </div>

      <main className="flex min-h-0 flex-1">
        <aside className="w-[27px] shrink-0 overflow-hidden">
          <div className="flex flex-col border-b border-r border-[#cfcfcf] pb-px">
            <div className="-ml-[2px] flex flex-col"><Side groups={LEFT} /></div>
          </div>
        </aside>
        <div className="flex w-[5px] shrink-0 items-center justify-center bg-[#eeeeee]">
          <span className="h-[26px] border-l-2 border-dotted border-[#b4b4b4]" />
        </div>
        <div className="flex min-w-0 flex-1 flex-col">
          <div className="min-h-0 flex-1"><Flange /></div>
          <div className="flex h-[27px] shrink-0 border-b border-[#cfcfcf]">
            <div className="flex flex-1 flex-col">
              <div className="mr-px h-1 border border-[#d8d8d8]" />
              <div className="flex items-start pl-0.5">
                <div className="flex h-[19px] w-20 items-center border-b border-r border-[#d8d8d8] bg-[#f0f0f0] px-1">
                  <button type="button">Модель1</button>
                  <button type="button" aria-label="Закрыть Модель1" className="ml-auto mr-0.5"><CloseMark /></button>
                </div>
                <div className="flex h-[21px] w-[77px] items-center border-b border-r border-[#d8d8d8] bg-white pl-[7px] pt-1">
                  <button type="button">Фланец</button>
                  <button type="button" aria-label="Закрыть Фланец" className="mb-1 ml-auto mr-1.5"><CloseMark /></button>
                </div>
              </div>
            </div>
            <div className="flex w-[63px] shrink-0 flex-col border-r border-[#cfcfcf]">
              <div className="h-1 border border-[#d8d8d8]" />
              <div className="flex flex-1 items-center border-l border-[#cfcfcf] pb-[3px]">
                <svg viewBox="0 0 62 18" className="h-[18px] w-[62px]" fill="none" aria-hidden="true">
                  <path d="M13 4v10L8 9zM26 4v10l5-5z" fill="#000" />
                  <path d="M39.500 1v17" stroke="#8e8e8e" />
                  <path d="M47 9l3.500-3L54 9M47 13l3.500-3 3.500 3" stroke="#000" strokeWidth="1.500" />
                </svg>
              </div>
            </div>
          </div>
        </div>
        <aside className="w-6 shrink-0 overflow-hidden">
          <div className="flex w-[27px] flex-col border-b border-[#cfcfcf] pl-[3px]"><Side groups={RIGHT} /></div>
        </aside>
      </main>

      <div className="flex h-8 shrink-0">
        <div className="flex w-64 items-center border-b border-r border-[#cfcfcf]">
          <span className="h-7 border-l border-dotted border-[#c4c4c4]" />
          <span className="w-1" />
          <ToolButton name="help" />
        </div>
      </div>

      <footer className="flex h-[27px] shrink-0">
        <div className="flex w-[283px] items-center border-r border-[#cfcfcf] text-[13px]">
          <span className="h-6 border-l border-dotted border-[#c4c4c4]" />
          <span className="w-[3px]" />
          <ToolButton name="panelsOrange" />
          <button type="button" className="ml-1 flex items-center gap-1"><Icon name="board" />ДСП бук</button>
        </div>
        <div className="ml-[915px] flex items-center border-r border-[#cfcfcf] pr-px">
          <Grip />
          <span className="w-0.5" />
          {["tree", "note", "catalog", "history", "search", "materials", "book"].map((n) => <ToolButton key={n} name={n} />)}
        </div>
      </footer>

      <div className="absolute bottom-[18px] right-3.5 flex h-[34px] w-[153px] items-center justify-center border-b-[3px] border-[#c4c4c4] bg-[#808080] font-['Liberation_Sans_Narrow','Roboto_Condensed','Liberation_Sans',sans-serif] text-[25px] font-bold leading-none text-[#e8e8e8]">
        PCPROGS.NET
      </div>
    </div>
  );
}
